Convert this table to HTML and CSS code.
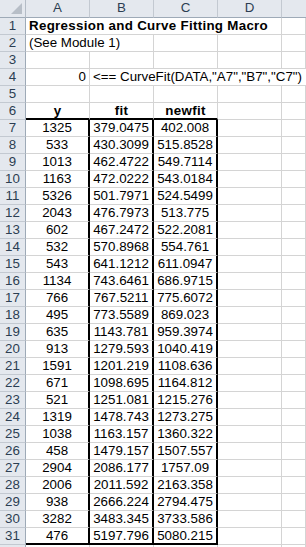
FILE: index.html
```html
<!DOCTYPE html>
<html>
<head>
<meta charset="utf-8">
<link rel="stylesheet" href="styles.css">
</head>
<body>
<div class="sheet">
  <div class="corner"><svg class="tri" width="11" height="11" viewBox="0 0 11 11"><polygon points="11,0 11,11 0,11" fill="#b7bec7"/></svg></div>
  <div class="ch">A</div><div class="ch">B</div><div class="ch">C</div><div class="ch">D</div><div class="ch last"></div>

  <div class="rh">1</div><div class="c s4 b">Regression and Curve Fitting Macro</div><div class="c"></div>
  <div class="rh">2</div><div class="c s2">(See Module 1)</div><div class="c"></div><div class="c"></div><div class="c"></div>
  <div class="rh">3</div><div class="c"></div><div class="c"></div><div class="c"></div><div class="c"></div><div class="c"></div>
  <div class="rh">4</div><div class="c r">0</div><div class="c s4 nb">&lt;== CurveFit(DATA,"A7","B7","C7")</div>
  <div class="rh">5</div><div class="c"></div><div class="c"></div><div class="c"></div><div class="c"></div><div class="c"></div>
  <div class="rh">6</div><div class="c n b bb">y</div><div class="c n b bb">fit</div><div class="c n b bb">newfit</div><div class="c"></div><div class="c"></div>

  <div class="rh">7</div><div class="c n tr">1325</div><div class="c n tr">379.0475</div><div class="c n tr">402.008</div><div class="c"></div><div class="c"></div>
  <div class="rh">8</div><div class="c n tr">533</div><div class="c n tr">430.3099</div><div class="c n tr">515.8528</div><div class="c"></div><div class="c"></div>
  <div class="rh">9</div><div class="c n tr">1013</div><div class="c n tr">462.4722</div><div class="c n tr">549.7114</div><div class="c"></div><div class="c"></div>
  <div class="rh">10</div><div class="c n tr">1163</div><div class="c n tr">472.0222</div><div class="c n tr">543.0184</div><div class="c"></div><div class="c"></div>
  <div class="rh">11</div><div class="c n tr">5326</div><div class="c n tr">501.7971</div><div class="c n tr">524.5499</div><div class="c"></div><div class="c"></div>
  <div class="rh">12</div><div class="c n tr">2043</div><div class="c n tr">476.7973</div><div class="c n tr">513.775</div><div class="c"></div><div class="c"></div>
  <div class="rh">13</div><div class="c n tr">602</div><div class="c n tr">467.2472</div><div class="c n tr">522.2081</div><div class="c"></div><div class="c"></div>
  <div class="rh">14</div><div class="c n tr">532</div><div class="c n tr">570.8968</div><div class="c n tr">554.761</div><div class="c"></div><div class="c"></div>
  <div class="rh">15</div><div class="c n tr">543</div><div class="c n tr">641.1212</div><div class="c n tr">611.0947</div><div class="c"></div><div class="c"></div>
  <div class="rh">16</div><div class="c n tr">1134</div><div class="c n tr">743.6461</div><div class="c n tr">686.9715</div><div class="c"></div><div class="c"></div>
  <div class="rh">17</div><div class="c n tr">766</div><div class="c n tr">767.5211</div><div class="c n tr">775.6072</div><div class="c"></div><div class="c"></div>
  <div class="rh">18</div><div class="c n tr">495</div><div class="c n tr">773.5589</div><div class="c n tr">869.023</div><div class="c"></div><div class="c"></div>
  <div class="rh">19</div><div class="c n tr">635</div><div class="c n tr">1143.781</div><div class="c n tr">959.3974</div><div class="c"></div><div class="c"></div>
  <div class="rh">20</div><div class="c n tr">913</div><div class="c n tr">1279.593</div><div class="c n tr">1040.419</div><div class="c"></div><div class="c"></div>
  <div class="rh">21</div><div class="c n tr">1591</div><div class="c n tr">1201.219</div><div class="c n tr">1108.636</div><div class="c"></div><div class="c"></div>
  <div class="rh">22</div><div class="c n tr">671</div><div class="c n tr">1098.695</div><div class="c n tr">1164.812</div><div class="c"></div><div class="c"></div>
  <div class="rh">23</div><div class="c n tr">521</div><div class="c n tr">1251.081</div><div class="c n tr">1215.276</div><div class="c"></div><div class="c"></div>
  <div class="rh">24</div><div class="c n tr">1319</div><div class="c n tr">1478.743</div><div class="c n tr">1273.275</div><div class="c"></div><div class="c"></div>
  <div class="rh">25</div><div class="c n tr">1038</div><div class="c n tr">1163.157</div><div class="c n tr">1360.322</div><div class="c"></div><div class="c"></div>
  <div class="rh">26</div><div class="c n tr">458</div><div class="c n tr">1479.157</div><div class="c n tr">1507.557</div><div class="c"></div><div class="c"></div>
  <div class="rh">27</div><div class="c n tr">2904</div><div class="c n tr">2086.177</div><div class="c n tr">1757.09</div><div class="c"></div><div class="c"></div>
  <div class="rh">28</div><div class="c n tr">2006</div><div class="c n tr">2011.592</div><div class="c n tr">2163.358</div><div class="c"></div><div class="c"></div>
  <div class="rh">29</div><div class="c n tr">938</div><div class="c n tr">2666.224</div><div class="c n tr">2794.475</div><div class="c"></div><div class="c"></div>
  <div class="rh">30</div><div class="c n tr">3282</div><div class="c n tr">3483.345</div><div class="c n tr">3733.586</div><div class="c"></div><div class="c"></div>
  <div class="rh">31</div><div class="c n tr bb">476</div><div class="c n tr bb">5197.796</div><div class="c n tr bb">5080.215</div><div class="c"></div><div class="c"></div>
  <div class="rh"></div><div class="c"></div><div class="c"></div><div class="c"></div><div class="c"></div><div class="c"></div>
</div>
</body>
</html>
```

FILE: styles.css
```css
* { box-sizing: border-box; }
html, body { margin: 0; padding: 0; background: #fff; overflow: hidden; }
body { width: 306px; height: 547px; }

.sheet {
  display: grid;
  grid-template-columns: 26px 64px 64px 64px 64px 1fr;
  grid-template-rows: 18px;
  grid-auto-rows: 17px;
  font-family: "Liberation Sans", Arial, sans-serif;
  font-size: 13.33px;
  color: #000;
}

.corner {
  background: #e4e8ee;
  border-right: 1px solid #b4bcc6;
  border-bottom: 1px solid #9eaab7;
  display: flex;
  align-items: flex-end;
  justify-content: flex-end;
  padding: 0 3px 3px 0;
}
.tri { display: block; }

.ch {
  background: #e4e8ee;
  border-right: 1px solid #c3c9d1;
  border-bottom: 1px solid #9eaab7;
  color: #2c3e52;
  font-size: 13.33px;
  text-align: center;
  line-height: 16px;
}
.ch.last { border-right: none; }

.rh {
  background: #e4e8ee;
  border-right: 1px solid #9eaab7;
  border-bottom: 1px solid #c3c9d1;
  color: #2c3e52;
  text-align: center;
  line-height: 15px;
  font-size: 13.33px;
}

.c {
  border-right: 1px solid #d4d4d4;
  border-bottom: 1px solid #d4d4d4;
  line-height: 15px;
  padding: 0 3px;
  white-space: nowrap;
  overflow: visible;
}
.s2 { grid-column: span 2; }
.s4 { grid-column: span 4; }
.nb { border-right: none; }
.b { font-weight: bold; letter-spacing: 0.3px; }
.n { text-align: center; padding: 0; }
.r { text-align: right; }
.bb { border-bottom: 2px solid #000; }
.tr { border-right: 2px solid #000; }
```
